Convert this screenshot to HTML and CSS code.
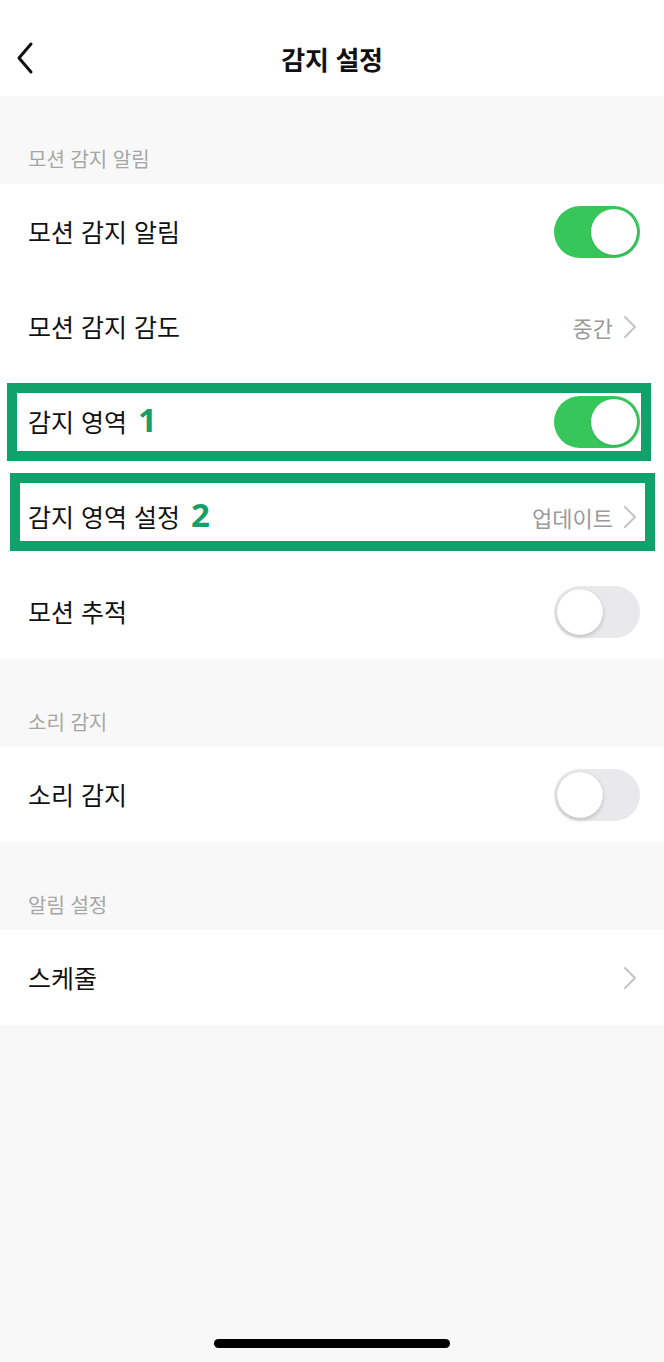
FILE: index.html
```html
<!DOCTYPE html>
<html lang="ko">
<head>
<meta charset="utf-8">
<link rel="stylesheet" href="styles.css">
</head>
<body>
<div class="screen">
  <header class="topbar">
    <svg class="back" width="20" height="34" viewBox="0 0 20 34"><path d="M16 3 L4 17 L16 31" fill="none" stroke="#111" stroke-width="3" stroke-linecap="round" stroke-linejoin="round"/></svg>
    <h1 class="title">감지 설정</h1>
  </header>

  <div class="section-head">모션 감지 알림</div>
  <div class="group">
    <div class="row"><span class="label">모션 감지 알림</span><span class="toggle on"><span class="knob"></span></span></div>
    <div class="row"><span class="label">모션 감지 감도</span><span class="value">중간<svg class="chev" width="14" height="24" viewBox="0 0 14 24"><path d="M2 2 L12 12 L2 22" fill="none" stroke="#c4c4c8" stroke-width="2" stroke-linecap="round" stroke-linejoin="round"/></svg></span></div>
    <div class="row"><span class="label">감지 영역<span class="mark">1</span></span><span class="toggle on"><span class="knob"></span></span><span class="hl hl1"></span></div>
    <div class="row"><span class="label">감지 영역 설정<span class="mark">2</span></span><span class="value">업데이트<svg class="chev" width="14" height="24" viewBox="0 0 14 24"><path d="M2 2 L12 12 L2 22" fill="none" stroke="#c4c4c8" stroke-width="2" stroke-linecap="round" stroke-linejoin="round"/></svg></span><span class="hl hl2"></span></div>
    <div class="row"><span class="label">모션 추적</span><span class="toggle"><span class="knob"></span></span></div>
  </div>

  <div class="section-head">소리 감지</div>
  <div class="group">
    <div class="row"><span class="label">소리 감지</span><span class="toggle"><span class="knob"></span></span></div>
  </div>

  <div class="section-head">알림 설정</div>
  <div class="group">
    <div class="row"><span class="label">스케줄</span><span class="value"><svg class="chev" width="14" height="24" viewBox="0 0 14 24"><path d="M2 2 L12 12 L2 22" fill="none" stroke="#c4c4c8" stroke-width="2" stroke-linecap="round" stroke-linejoin="round"/></svg></span></div>
  </div>

  <div class="spacer"></div>
  <div class="home"><span class="home-bar"></span></div>
</div>
</body>
</html>
```
FILE: styles.css
```css
* { box-sizing: border-box; }
html, body { margin: 0; padding: 0; }
body {
  background: #f8f8f8;
  font-family: "Noto Sans CJK KR", "Noto Sans", sans-serif;
  color: #111;
}
.screen {
  width: 664px;
  height: 1362px;
  display: flex;
  flex-direction: column;
  background: #f8f8f8;
}
.topbar {
  height: 96px;
  background: #fff;
  display: flex;
  align-items: center;
  justify-content: center;
  position: relative;
}
.back {
  position: absolute;
  left: 15px;
  top: 41px;
}
.title {
  margin: 0;
  font-size: 26px;
  font-weight: 700;
  line-height: 1;
  padding-top: 22px;
  letter-spacing: -0.3px;
}
.section-head {
  height: 88px;
  padding: 51px 0 0 28px;
  font-size: 20px;
  line-height: 24px;
  color: #a6a6a6;
}
.group {
  background: #fff;
}
.row {
  height: 95px;
  display: flex;
  align-items: center;
  justify-content: space-between;
  padding: 0 24px 0 28px;
  position: relative;
}
.label {
  font-size: 25px;
  line-height: 1;
  color: #111;
  display: flex;
  align-items: center;
}
.mark {
  font-family: "Noto Sans", sans-serif;
  font-weight: 700;
  font-size: 33px;
  color: #14a068;
  margin-left: 11px;
  line-height: 1;
  position: relative;
  top: -2px;
}
.value {
  display: flex;
  align-items: center;
  gap: 10px;
  font-size: 22px;
  color: #9a9a9a;
  padding-right: 3px;
}
.chev { display: block; }
.toggle {
  width: 86px;
  height: 52px;
  border-radius: 26px;
  background: #e9e9eb;
  position: relative;
  flex: none;
}
.toggle .knob {
  position: absolute;
  top: 3px;
  left: 3px;
  width: 46px;
  height: 46px;
  border-radius: 50%;
  background: #fff;
  box-shadow: 0 2px 4px rgba(0,0,0,0.18), 0 0 1px rgba(0,0,0,0.15);
}
.toggle.on { background: #36c65a; }
.toggle.on .knob { left: 37px; box-shadow: 0 1px 2px rgba(0,0,0,0.12); }
.hl {
  position: absolute;
  border: 10px solid #0fa26b;
  pointer-events: none;
}
.hl1 { top: 9px; bottom: 8px; left: 7px; right: 13px; }
.hl2 { top: 4px; bottom: 13px; left: 10px; right: 9px; }
.spacer { flex: 1; }
.home {
  height: 23px;
  display: flex;
  justify-content: center;
  align-items: flex-start;
}
.home-bar {
  width: 236px;
  height: 9px;
  border-radius: 5px;
  background: #000;
}
```
